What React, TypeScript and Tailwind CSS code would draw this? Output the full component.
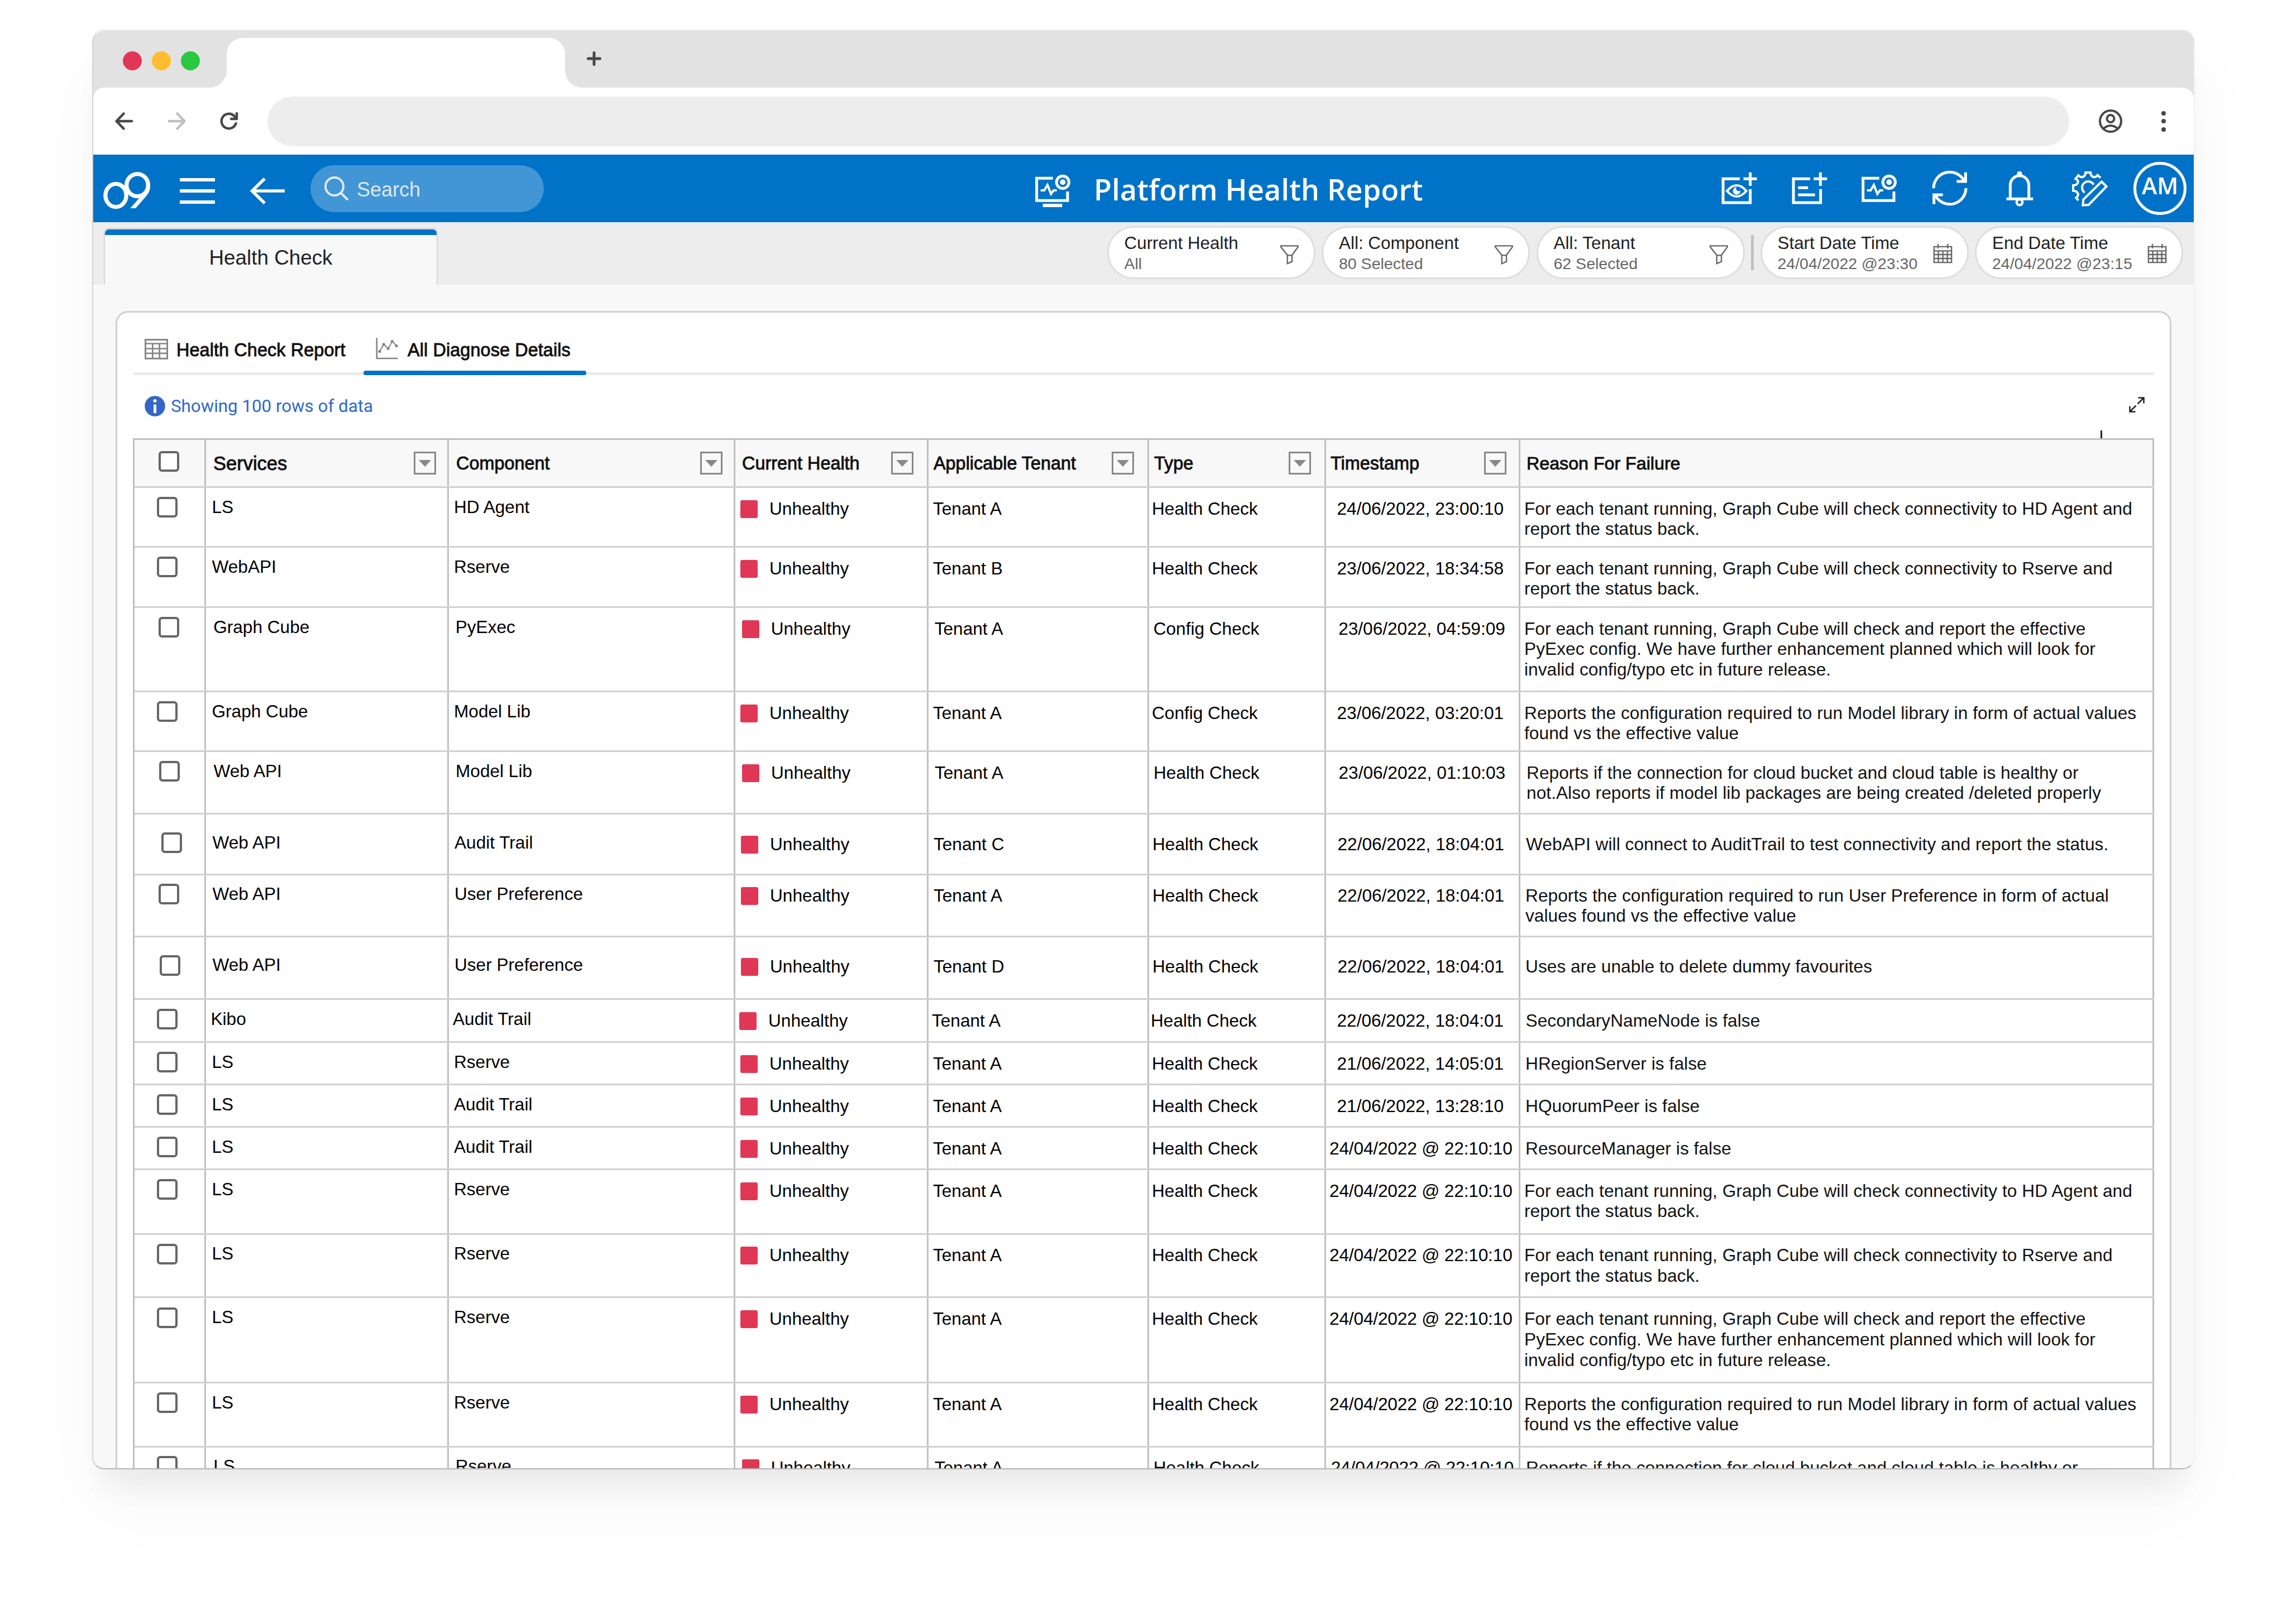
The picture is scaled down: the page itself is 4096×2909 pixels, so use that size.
import type { ReactNode } from "react";

const WHITE = "#ffffff";

function MonitorIcon({ stand = false }: { stand?: boolean }) {
  return (
    <svg className="size-[70px] shrink-0" viewBox="815 70 210 210" fill="none" stroke={WHITE} strokeWidth="15">
      <path d="M919 119H832V239H998V190" />
      <circle cx="972" cy="140" r="33.5" />
      <circle cx="972" cy="140" r="15" fill={WHITE} stroke="none" />
      <path d="M853 184H873L890 155L909 203L923 184H940" strokeWidth="12" />
      {stand && <path d="M865 265H969" strokeWidth="18" />}
    </svg>
  );
}

function ViewAddIcon() {
  return (
    <svg className="size-[70px] shrink-0" viewBox="60 70 210 210" fill="none" stroke={WHITE} strokeWidth="15">
      <path d="M168 122H78V250H224V177" />
      <path d="M188 122H260M224 87V160" />
      <path d="M99 187Q151 127 203 187Q151 247 99 187Z" strokeWidth="12" />
      <path d="M151 167A20 20 0 1 0 171 184A11 11 0 1 1 151 167Z" fill={WHITE} stroke="none" />
    </svg>
  );
}

function NoteAddIcon() {
  return (
    <svg className="size-[70px] shrink-0" viewBox="437 70 210 210" fill="none" stroke={WHITE} strokeWidth="15">
      <path d="M545 122H455V250H601V177" />
      <path d="M564 122H636M600 87V160" />
      <path d="M480 170H534M480 208H571" />
    </svg>
  );
}

function RefreshIcon() {
  return (
    <svg className="size-[70px] shrink-0" viewBox="1190 70 210 210" fill="none" stroke={WHITE} strokeWidth="15">
      <path d="M1208 173A87 87 0 0 1 1370 128.500" />
      <path d="M1380 87V136H1332" />
      <path d="M1382 172A87 87 0 0 1 1220 215.500" />
      <path d="M1210 258V208H1258" />
    </svg>
  );
}

function BellIcon() {
  return (
    <svg className="size-[70px] shrink-0" viewBox="307 67 210 210" fill="none" stroke={WHITE} strokeWidth="15">
      <path d="M362 224V154A50 52 0 0 1 462 154V224" />
      <path d="M341 227H485" />
      <circle cx="412" cy="92" r="14" fill={WHITE} stroke="none" />
      <circle cx="412" cy="245" r="15.500" strokeWidth="13" />
    </svg>
  );
}

function GearEditIcon() {
  return (
    <svg className="size-[70px] shrink-0" viewBox="683 67 210 210" fill="none" stroke={WHITE} strokeWidth="12">
      <path d="M726 235L714 221C732 207 726 184 698 183V154C726 153 733 130 711 119L726 100C742 118 763 110 765 85H791C793 110 814 118 829 99L845 113" />
      <path d="M808 150A33 33 0 1 0 760 193" />
      <path d="M851 134L877 160L781 259L750 261L753 230Z" />
    </svg>
  );
}

function FunnelIcon() {
  return (
    <svg className="mt-[30px] h-[38px] w-[35px] shrink-0" viewBox="3 470 105 114" fill="none" stroke="#666666" strokeWidth="7">
      <path d="M9 477H101V483L69 527V562L44 573V527L9 483Z" />
      <path d="M42 528H70" />
    </svg>
  );
}

function CalendarIcon() {
  return (
    <svg className="mt-[28px] h-[36px] w-[35px] shrink-0" viewBox="1203 464 105 108" fill="none" stroke="#666666" strokeWidth="7">
      <path d="M1208.500 481.500H1302.500V566.500H1208.500Z" />
      <path d="M1230 466V491M1282 466V491" />
      <path d="M1208 504H1303M1208 524H1303M1208 545H1303" />
      <path d="M1232 504V566M1256 504V566M1280 504V566" />
    </svg>
  );
}

function FilterPill({ title, value, icon }: { title: string; value: string; icon: ReactNode }) {
  return (
    <div className="flex h-[95px] w-[373px] justify-between rounded-full border-[3px] border-[#dedede] bg-white pr-[26px] pl-[28px]">
      <div className="pt-[9px] whitespace-nowrap">
        <div className="text-[31.400px] leading-[37px] text-[#1f1f1f]">{title}</div>
        <div className="text-[28.500px] leading-[37px] text-[#666666]">{value}</div>
      </div>
      {icon}
    </div>
  );
}

function BrowserChrome() {
  return (
    <>
      <div className="flex h-[102px] bg-[#e2e2e2]">
        <div className="flex gap-[18px] pt-[37px] pl-[53px]">
          <span className="size-[34px] rounded-full bg-[#e13756]" />
          <span className="size-[34px] rounded-full bg-[#ffbc30]" />
          <span className="size-[34px] rounded-full bg-[#2ac840]" />
        </div>
        <div className="relative mt-[13px] ml-[48px] w-[606px] rounded-t-[28px] bg-white">
          <span className="absolute bottom-0 -left-[31px] size-[31px] bg-white">
            <span className="block size-full rounded-br-[31px] bg-[#e2e2e2]" />
          </span>
          <span className="absolute -right-[31px] bottom-0 size-[31px] bg-white">
            <span className="block size-full rounded-bl-[31px] bg-[#e2e2e2]" />
          </span>
        </div>
        <svg className="mt-[36px] ml-[38px] size-[28px]" viewBox="0 0 28 28" stroke="#474747" strokeWidth="5" strokeLinecap="round">
          <path d="M14 3.500V24.500M3.500 14H24.500" />
        </svg>
      </div>
      <div className="bg-[#e2e2e2]">
        <div className="flex h-[120px] items-center rounded-t-[20px] bg-white pl-[37px]">
          <svg className="size-[36px]" viewBox="0 0 36 36" fill="none" stroke="#474747" strokeWidth="4.500" strokeLinecap="round" strokeLinejoin="round">
            <path d="M17.500 4.500L4.500 18L17.500 31.500M5 18H32" />
          </svg>
          <svg className="ml-[59px] size-[36px]" viewBox="0 0 36 36" fill="none" stroke="#bfbfbf" strokeWidth="4.500" strokeLinecap="round" strokeLinejoin="round">
            <path d="M18.500 4.500L31.500 18L18.500 31.500M31 18H4" />
          </svg>
          <svg className="ml-[57px] size-[36px]" viewBox="0 0 36 36" fill="none" stroke="#474747" strokeWidth="4.500" strokeLinecap="round" strokeLinejoin="round">
            <path d="M30.500 22A13.200 13.200 0 1 1 28 9.500L31.500 13" />
            <path d="M32 4V14H22" />
          </svg>
          <div className="ml-[51px] h-[89px] w-[3227px] rounded-full bg-[#ededed]" />
          <svg className="ml-[52px] size-[44px]" viewBox="0 0 44 44" fill="none" stroke="#474747" strokeWidth="4">
            <circle cx="22" cy="22" r="19" />
            <circle cx="22" cy="17.500" r="6.500" />
            <path d="M9 35.500Q22 24.500 35 35.500" />
          </svg>
          <div className="ml-[69px] flex flex-col gap-[6.500px]">
            <span className="size-[8px] rounded-full bg-[#474747]" />
            <span className="size-[8px] rounded-full bg-[#474747]" />
            <span className="size-[8px] rounded-full bg-[#474747]" />
          </div>
        </div>
      </div>
    </>
  );
}

function AppHeader() {
  return (
    <header className="flex h-[121px] items-center bg-[#0072c8] pr-[13px] pl-[16px]">
      <svg className="mt-[8px] h-[74px] w-[90px]" viewBox="70 105 270 222" fill="none" stroke={WHITE} strokeWidth="22">
        <ellipse cx="143.500" cy="240" rx="56" ry="62" />
        <ellipse cx="259" cy="185" rx="58" ry="60" />
        <path d="M328 188C328 214 319 230 303 248L250 309H221L284 238Z" fill={WHITE} stroke="none" />
      </svg>
      <div className="mt-[8px] ml-[49px] flex w-[63px] flex-col gap-[14px]">
        <span className="h-[6px] bg-white" />
        <span className="h-[6px] bg-white" />
        <span className="h-[6px] bg-white" />
      </div>
      <svg className="mt-[8px] ml-[61px] h-[52px] w-[66px]" viewBox="0 0 66 52" fill="none" stroke={WHITE} strokeWidth="5.500">
        <path d="M28 4L5.500 26L28 48M5 26H64" />
      </svg>
      <div className="ml-[44px] flex h-[84px] w-[418px] items-center rounded-full bg-[#4296d6] pl-[23px]">
        <svg className="size-[48px]" viewBox="0 0 48 48" fill="none" stroke="#e2e8ee" strokeWidth="4">
          <circle cx="20" cy="20" r="16" />
          <path d="M31 31L44 44" />
        </svg>
        <span className="mt-[4px] ml-[12px] text-[36px] leading-[42px] text-[#dfe6ec]">Search</span>
      </div>
      <div className="ml-[877px] flex items-center">
        <MonitorIcon stand />
        <h1 className="mt-[2px] ml-[38px] font-['Open_Sans'] text-[52px] leading-[70px] font-semibold tracking-[0.250px] whitespace-nowrap text-white">
          Platform Health Report
        </h1>
      </div>
      <div className="ml-auto flex items-center gap-[55.600px]">
        <ViewAddIcon />
        <NoteAddIcon />
        <MonitorIcon />
        <RefreshIcon />
        <BellIcon />
        <GearEditIcon />
        <div className="-ml-[12.600px] flex size-[95px] items-center justify-center rounded-full border-[5px] border-white pb-[12px] font-['Open_Sans'] text-[41px] leading-[50px] font-semibold text-white">
          AM
        </div>
      </div>
    </header>
  );
}

function FilterBar() {
  return (
    <div className="flex h-[112px] items-start bg-[#ededed] pr-[19px] pl-[19px]">
      <div className="mt-[10px] h-[102px] w-[598px] rounded-t-[9px] border-x-2 border-t-[3px] border-[#d6d6d6]">
        <div className="h-full rounded-t-[7px] border-t-[10px] border-[#0072c8] bg-[#f8f8f8] pt-[20px] text-center text-[36.800px] leading-[42px] text-[#222222]">
          Health Check
        </div>
      </div>
      <div className="mt-[7px] ml-auto flex gap-[11.500px]">
        <FilterPill title="Current Health" value="All" icon={<FunnelIcon />} />
        <FilterPill title="All: Component" value="80 Selected" icon={<FunnelIcon />} />
        <FilterPill title="All: Tenant" value="62 Selected" icon={<FunnelIcon />} />
        <div className="mt-[16px] h-[63px] w-[5px] bg-[#c0c0c0]" />
        <FilterPill title="Start Date Time" value="24/04/2022 @23:30" icon={<CalendarIcon />} />
        <FilterPill title="End Date Time" value="24/04/2022 @23:15" icon={<CalendarIcon />} />
      </div>
    </div>
  );
}

function ReportTabs() {
  return (
    <nav className="ml-[29px] flex h-[112px] w-[3619px] border-b-[5px] border-[#ebebeb] pl-[20px] text-[32.400px] leading-[38px] tracking-[0.100px] whitespace-nowrap text-[#111111] [-webkit-text-stroke:0.900px_#111111]">
      <div className="flex w-[392px] pt-[47px]">
        <svg className="h-[37px] w-[42px]" viewBox="57 81 126 110" fill="none" stroke="#858585" strokeWidth="8">
          <path d="M61 85H179V186H61Z" strokeWidth="9" />
          <path d="M61 106H179M61 133H179M61 158H179M100 106V186M137 106V186" />
        </svg>
        <span className="mt-[1px] ml-[15px]">Health Check Report</span>
      </div>
      <div className="relative flex w-[399px] pt-[47px] pl-[22px]">
        <svg className="-mt-[2px] h-[39px] w-[40px]" viewBox="1300 76 119 118" fill="none" stroke="#858585" strokeWidth="8">
          <path d="M1304.500 77V188H1418" />
          <path d="M1320 150L1342 112L1366 134L1388 96L1411 120" strokeWidth="6" />
          <g fill="#858585" stroke="none">
            <circle cx="1320" cy="150" r="8" />
            <circle cx="1342" cy="112" r="8" />
            <circle cx="1366" cy="134" r="8" />
            <circle cx="1388" cy="96" r="8" />
            <circle cx="1411" cy="120" r="8" />
          </g>
        </svg>
        <span className="mt-[1px] ml-[17px]">All Diagnose Details</span>
        <span className="absolute -bottom-[5px] left-0 h-[8px] w-full rounded-[4px] bg-[#0072c8]" />
      </div>
    </nav>
  );
}

function InfoBar() {
  return (
    <div className="relative ml-[29px] flex h-[113px] w-[3619px] justify-between pl-[20px]">
      <div className="flex pt-[37px]">
        <svg className="size-[37px]" viewBox="0 0 37 37">
          <circle cx="18.500" cy="18.500" r="18.300" fill="#3366c8" />
          <circle cx="18.500" cy="9" r="3" fill={WHITE} />
          <path d="M18.500 15.500V31" stroke={WHITE} strokeWidth="5" />
        </svg>
        <span className="ml-[10px] font-['Roboto'] text-[31.300px] leading-[38px] text-[#2e69c8]">
          Showing 100 rows of data
        </span>
      </div>
      <svg className="mt-[38px] mr-[16px] size-[30px]" viewBox="0 0 30 30" fill="none" stroke="#222222" strokeWidth="2.500">
        <path d="M2.500 27.500L13.500 16.500M16.500 13.500L27.500 2.500M17.500 2.500H27.500V12.500M2.500 17.500V27.500H12.500" />
      </svg>
      <span className="absolute right-[93px] bottom-0 h-[14px] w-[3px] bg-[#222222]" />
    </div>
  );
}

function Caret() {
  return (
    <span className="flex h-[41px] w-[40px] shrink-0 items-center justify-center border-[3px] border-[#888888]">
      <svg className="h-[12px] w-[22px]" viewBox="0 0 22 12" fill="#888888">
        <path d="M0 0H22L11 12Z" />
      </svg>
    </span>
  );
}

const COLUMNS = "grid grid-cols-[128px_435px_513px_346px_395px_317px_348px_1135px]";
const CELL = "border-r-[3px] border-[#c0c0c0]";

const HEADERS = [
  { label: "Services", cell: "pl-[13px] pr-[20px]", text: "text-[34.500px]" },
  { label: "Component", cell: "pl-[13px] pr-[20px]", text: "text-[32.400px]" },
  { label: "Current Health", cell: "pl-[12px] pr-[24px]", text: "text-[32.400px]" },
  { label: "Applicable Tenant", cell: "pl-[9px] pr-[24px]", text: "text-[32.400px]" },
  { label: "Type", cell: "pl-[9px] pr-[24px]", text: "text-[32.400px]" },
  { label: "Timestamp", cell: "pl-[8px] pr-[22px]", text: "text-[32.400px]" },
];

type Row = {
  height: number;
  /** distance from the row's top to the first text line */
  top: number;
  service: string;
  component: string;
  tenant: string;
  type: string;
  time: string;
  reason: string[];
  shift?: number;
  checkShift?: number;
  reasonShift?: number;
};

const HD_AGENT = ["For each tenant running, Graph Cube will check connectivity to HD Agent and", "report the status back."];
const RSERVE = ["For each tenant running, Graph Cube will check connectivity to Rserve and", "report the status back."];
const PYEXEC = [
  "For each tenant running, Graph Cube will check and report the effective",
  "PyExec config. We have further enhancement planned which will look for",
  "invalid config/typo etc in future release.",
];
const MODEL = ["Reports the configuration required to run Model library in form of actual values", "found vs the effective value"];
const BUCKET = [
  "Reports if the connection for cloud bucket and cloud table is healthy or",
  "not.Also reports if model lib packages are being created /deleted properly",
];
const HC = "Health Check";
const LATE = "24/04/2022 @ 22:10:10";

const ROWS: Row[] = [
  { height: 107, top: 18.5, service: "LS", component: "HD Agent", tenant: "Tenant A", type: HC, time: "24/06/2022, 23:00:10", reason: HD_AGENT },
  { height: 108, top: 18.5, service: "WebAPI", component: "Rserve", tenant: "Tenant B", type: HC, time: "23/06/2022, 18:34:58", reason: RSERVE },
  { height: 151, top: 18.5, service: "Graph Cube", component: "PyExec", tenant: "Tenant A", type: "Config Check", time: "23/06/2022, 04:59:09", reason: PYEXEC, shift: 2.7, checkShift: 2.7 },
  { height: 107, top: 18.5, service: "Graph Cube", component: "Model Lib", tenant: "Tenant A", type: "Config Check", time: "23/06/2022, 03:20:01", reason: MODEL },
  { height: 112, top: 18.5, service: "Web API", component: "Model Lib", tenant: "Tenant A", type: HC, time: "23/06/2022, 01:10:03", reason: BUCKET, shift: 3, checkShift: 4, reasonShift: 4 },
  { height: 109, top: 34.5, service: "Web API", component: "Audit Trail", tenant: "Tenant C", type: HC, time: "22/06/2022, 18:04:01", reason: ["WebAPI will connect to AuditTrail to test connectivity and report the status."], shift: 1, checkShift: 8, reasonShift: 3 },
  { height: 111, top: 17.5, service: "Web API", component: "User Preference", tenant: "Tenant A", type: HC, time: "22/06/2022, 18:04:01", reason: ["Reports the configuration required to run User Preference in form of actual", "values found vs the effective value"], shift: 1, checkShift: 3, reasonShift: 2 },
  { height: 112, top: 34, service: "Web API", component: "User Preference", tenant: "Tenant D", type: HC, time: "22/06/2022, 18:04:01", reason: ["Uses are unable to delete dummy favourites"], shift: 1, checkShift: 5, reasonShift: 2 },
  { height: 77, top: 18.5, service: "Kibo", component: "Audit Trail", tenant: "Tenant A", type: HC, time: "22/06/2022, 18:04:01", reason: ["SecondaryNameNode is false"], shift: -2, reasonShift: 2.5 },
  { height: 76, top: 18.5, service: "LS", component: "Rserve", tenant: "Tenant A", type: HC, time: "21/06/2022, 14:05:01", reason: ["HRegionServer is false"], reasonShift: 2 },
  { height: 76, top: 18.5, service: "LS", component: "Audit Trail", tenant: "Tenant A", type: HC, time: "21/06/2022, 13:28:10", reason: ["HQuorumPeer is false"], reasonShift: 2 },
  { height: 76, top: 18.5, service: "LS", component: "Audit Trail", tenant: "Tenant A", type: HC, time: LATE, reason: ["ResourceManager is false"], reasonShift: 2 },
  { height: 116, top: 18.5, service: "LS", component: "Rserve", tenant: "Tenant A", type: HC, time: LATE, reason: HD_AGENT },
  { height: 113, top: 18, service: "LS", component: "Rserve", tenant: "Tenant A", type: HC, time: LATE, reason: RSERVE },
  { height: 153, top: 19.3, service: "LS", component: "Rserve", tenant: "Tenant A", type: HC, time: LATE, reason: PYEXEC },
  { height: 115, top: 18.5, service: "LS", component: "Rserve", tenant: "Tenant A", type: HC, time: LATE, reason: MODEL },
  { height: 120, top: 17.5, service: "LS", component: "Rserve", tenant: "Tenant A", type: HC, time: LATE, reason: BUCKET, shift: 2.7, reasonShift: 3 },
];

function Checkbox() {
  return <span className="block size-[37px] rounded-[6px] border-[4px] border-[#666666] bg-white" />;
}

function TableRow({ row }: { row: Row }) {
  const { shift = 0, checkShift = 0, reasonShift = 0, top } = row;
  const lead = top - 3;
  const late = row.time === LATE;
  return (
    <div className={`${COLUMNS} border-b-[3px] border-[#d0d0d0] whitespace-nowrap`} style={{ height: row.height }}>
      <div className={CELL} style={{ paddingTop: top - 2.5, paddingLeft: 40 + checkShift }}>
        <Checkbox />
      </div>
      <div className={CELL} style={{ paddingTop: lead, paddingLeft: 10.5 + shift }}>{row.service}</div>
      <div className={CELL} style={{ paddingTop: lead, paddingLeft: 9 + shift }}>{row.component}</div>
      <div className={`${CELL} flex items-start`} style={{ paddingTop: top, paddingLeft: 9 + shift }}>
        <span className="mt-[3px] mr-[21px] h-[32px] w-[31px] rounded-[3px] bg-[#e13756]" />
        Unhealthy
      </div>
      <div className={CELL} style={{ paddingTop: top, paddingLeft: 8 + shift }}>{row.tenant}</div>
      <div className={CELL} style={{ paddingTop: top, paddingLeft: 5 + shift }}>{row.type}</div>
      <div
        className={late ? `${CELL} tracking-[-0.150px]` : CELL}
        style={{ paddingTop: top, paddingLeft: (late ? 6 : 19.5) + Math.max(shift, 0) }}
      >
        {row.time}
      </div>
      <div className={`${CELL} tracking-[0.070px] text-[#111111]`} style={{ paddingTop: top, paddingLeft: 7 + reasonShift }}>
        {row.reason.map((line) => (
          <div key={line}>{line}</div>
        ))}
      </div>
    </div>
  );
}

function DiagnoseTable() {
  return (
    <div className="ml-[28px] w-[3620px] border-t-[3px] border-l-[3px] border-[#c0c0c0] bg-white text-[31.600px] leading-[36.700px] text-black">
      <div className={`${COLUMNS} h-[86px] border-b-[3px] border-[#d0d0d0] bg-[#f8f8f8]`}>
        <div className={`${CELL} pt-[20px] pl-[43px]`}>
          <Checkbox />
        </div>
        {HEADERS.map((h) => (
          <div key={h.label} className={`${CELL} flex items-start justify-between pt-[21px] ${h.cell}`}>
            <span className={`mt-[3px] leading-[37px] whitespace-nowrap text-[#111111] [-webkit-text-stroke:0.900px_#111111] ${h.text}`}>{h.label}</span>
            <Caret />
          </div>
        ))}
        <div className={`${CELL} pt-[24px] pl-[11px] text-[32.200px] leading-[37px] text-[#111111] [-webkit-text-stroke:0.900px_#111111]`}>
          Reason For Failure
        </div>
      </div>
      {ROWS.map((row, i) => (
        <TableRow key={i} row={row} />
      ))}
    </div>
  );
}

export default function App() {
  return (
    <div className="h-[2909px] w-[4096px] overflow-hidden bg-white pt-[53px] pl-[165px] font-['Liberation_Sans',sans-serif]">
      <div className="h-[2579px] w-[3766px] overflow-hidden rounded-[22px] border-2 border-t-[#ececec] border-r-[#f0f0f0] border-b-[#b5b5b5] border-l-[#d4d4d4] bg-[#f8f8f8] shadow-[0_50px_50px_-20px_rgba(0,0,0,0.06),0_60px_140px_rgba(0,0,0,0.04)]">
        <BrowserChrome />
        <AppHeader />
        <FilterBar />
        <main className="mx-[40px] mt-[47px] h-[2300px] rounded-t-[22px] border-[3px] border-[#cfcfcf] bg-white">
          <ReportTabs />
          <InfoBar />
          <DiagnoseTable />
        </main>
      </div>
    </div>
  );
}
